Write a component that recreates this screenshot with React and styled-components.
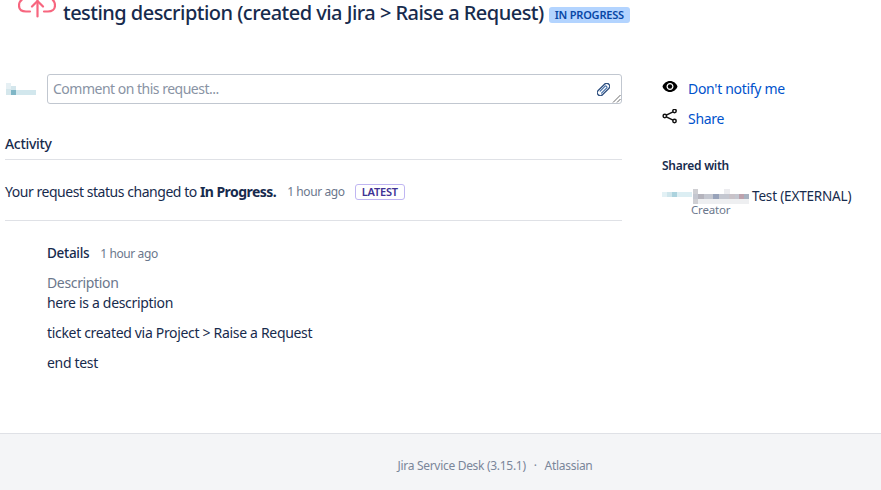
import React from "react";
import styled, { createGlobalStyle } from "styled-components";

const Global = createGlobalStyle`
  html, body { margin: 0; padding: 0; background: #fff; }
  body { font-family: "Noto Sans", "Open Sans", sans-serif; font-size: 14px; color: #172b4d; }
`;
const Page = styled.div`
  width: 881px; height: 490px; overflow: hidden; display: flex; flex-direction: column;
`;
const Header = styled.header`
  height: 74px; display: flex; align-items: flex-start; padding-left: 18px; box-sizing: border-box; overflow: hidden;
`;
const CloudIcon = styled.svg`
  width: 38px; height: 18px; flex: none; margin-right: 7px;
`;
const Title = styled.h1`
  margin: 0; font-size: 20px; font-weight: 500; line-height: 26px; color: #172b4d; white-space: nowrap; letter-spacing: -0.53px;
`;
const StatusLozenge = styled.span`
  margin: 7px 0 0 5px; height: 16px; padding: 0 6px; border-radius: 3px; background: #b3d4ff; color: #0747a6;
  font-size: 11px; font-weight: 600; line-height: 16px; letter-spacing: -0.2px; white-space: nowrap;
`;
const Body = styled.div`
  flex: 1; display: flex; padding-left: 5px;
`;
const Main = styled.main`
  width: 617px; flex: none;
`;
const CommentRow = styled.div`
  display: flex; align-items: center; gap: 11px; height: 30px;
`;
const CommentBox = styled.div`
  position: relative; flex: 1; height: 30px; box-sizing: border-box; border: 1px solid #c1c7d0; border-radius: 3px;
  padding: 0 5px; line-height: 28px; color: #8993a4; letter-spacing: -0.5px;
`;
const Clip = styled.svg`
  position: absolute; right: 11px; top: 8px; width: 13px; height: 13px;
`;
const Grip = styled.svg`
  position: absolute; right: 0; bottom: 0; width: 9px; height: 9px;
`;
const ActivityHead = styled.h2`
  margin: 30px 0 0; padding-bottom: 6px; font-size: 14px; font-weight: 500; line-height: 19px; border-bottom: 1px solid #dfe1e6; letter-spacing: -0.3px;
`;
const StatusRow = styled.div`
  display: flex; align-items: center; box-sizing: border-box; height: 61px; padding-top: 2px; border-bottom: 1px solid #dfe1e6; white-space: nowrap; letter-spacing: -0.46px;
`;
const StatusText = styled.span`
  color: #172b4d;
  b { font-weight: 700; letter-spacing: -0.55px; }
`;
const Time = styled.span`
  margin-left: ${p => p.$gap}px; font-size: 12px; color: #6b778c; letter-spacing: -0.4px;
`;
const LatestTag = styled.span`
  margin: 2px 0 0 10px; height: 14px; padding: 0 6px; border: 1px solid #c0b6f2; border-radius: 3px; color: #403294;
  font-size: 11px; font-weight: 600; line-height: 14px; letter-spacing: -0.2px;
`;
const Details = styled.section`
  padding: 21px 0 0 42px;
`;
const DetailsHead = styled.div`
  display: flex; align-items: center; height: 22px; letter-spacing: -0.3px;
`;
const DetailsLabel = styled.span`
  font-size: 13.5px; font-weight: 500;
`;
const FieldLabel = styled.div`
  margin-top: 9px; line-height: 20px; color: #6b778c; letter-spacing: -0.35px;
`;
const Para = styled.p`
  margin: 0 0 10px; line-height: 20px; letter-spacing: -0.32px;
`;
const Aside = styled.aside`
  margin: -1px 0 0 40px; flex: 1;
`;
const ActionLink = styled.a`
  display: flex; align-items: center; height: 30px; color: #0052cc; letter-spacing: -0.3px; text-decoration: none;
`;
const ActionIcon = styled.svg`
  width: 16px; height: 16px; flex: none; margin-right: 10px; position: relative; top: -1px;
`;
const SharedHead = styled.h3`
  margin: 24px 0 0; font-size: 12px; font-weight: 600; line-height: 17px; letter-spacing: -0.25px;
`;
const Person = styled.div`
  display: flex; align-items: center; margin-top: 13px; height: 18px; white-space: nowrap; letter-spacing: -0.17px;
`;
const Blur = styled.svg`
  flex: none; display: block;
`;
const PersonName = styled.span`
  margin-left: 3px; font-size: 13.5px;
`;
const Role = styled.div`
  margin: -2px 0 0 29px; font-size: 11.5px; line-height: 14px; color: #6b778c; letter-spacing: -0.2px;
`;
const Footer = styled.footer`
  flex: none; height: 57px; box-sizing: border-box; border-top: 1px solid #dfe1e6; background: #f4f5f7;
  display: flex; align-items: center; justify-content: center; gap: 8px; padding: 6px 0 0 109px;
  font-size: 12px; color: #7a869a; letter-spacing: -0.3px;
`;

const Avatar = () => (
  <Blur width="31" height="12" viewBox="0 0 31 12" shapeRendering="crispEdges">
    <rect x="1" y="0" width="5" height="6" fill="#e6f0f4" />
    <rect x="1" y="6" width="5" height="6" fill="#d5e7ec" />
    <rect x="6" y="3" width="5" height="4" fill="#d3e6ec" />
    <rect x="6" y="7" width="5" height="5" fill="#7fb6c6" />
    <rect x="11" y="7" width="20" height="5" fill="#d2e7ed" />
  </Blur>
);
const AvatarSmall = () => (
  <Blur width="30" height="8" viewBox="0 0 30 8" shapeRendering="crispEdges">
    <rect width="5" height="5" y="0" fill="#e3f1f5" />
    <rect x="5" width="5" height="5" fill="#d0e6ec" />
    <rect x="10" width="5" height="5" fill="#acd3de" />
    <rect x="15" width="15" height="5" fill="#dceef3" />
  </Blur>
);
const NameBlur = () => (
  <Blur width="56" height="15" viewBox="0 0 56 15" shapeRendering="crispEdges" style={{ marginLeft: 1 }}>
    <rect x="0" y="0" width="5" height="15" fill="#cfcfd3" />
    <rect x="0" y="5" width="56" height="5" fill="#c4c7d0" />
    <rect x="5" y="5" width="6" height="5" fill="#b5b4bd" />
    <rect x="20" y="5" width="6" height="5" fill="#98a3ba" />
    <rect x="31" y="0" width="6" height="5" fill="#ececef" />
    <rect x="36" y="5" width="6" height="5" fill="#c9c3c9" />
    <rect x="46" y="5" width="5" height="5" fill="#bda2ad" />
    <rect x="51" y="5" width="5" height="5" fill="#a7b1c0" />
    <rect x="5" y="10" width="51" height="5" fill="#eeeff1" />
  </Blur>
);

export default function App() {
  return (
    <Page>
      <Global />
      <Header>
        <CloudIcon viewBox="0 0 38 18" fill="none" stroke="#f7667f" strokeWidth="2.200" strokeLinecap="round" strokeLinejoin="round">
          <path d="M6 -2C2.500 0 1 2.500 1 5.500C1 9.500 4 11.500 8 11.500H12" />
          <path d="M26 11.500H30C34 11.500 37 9 37 5.500C37 2.500 35.500 0 33 -2" />
          <path d="M19.500 16.500V1" />
          <path d="M14 6.500L19.500 1L25 6.500" />
        </CloudIcon>
        <Title>testing description (created via Jira &gt; Raise a Request)</Title>
        <StatusLozenge>IN PROGRESS</StatusLozenge>
      </Header>
      <Body>
        <Main>
          <CommentRow>
            <Avatar />
            <CommentBox>
              Comment on this request...
              <Clip viewBox="0 0 13 13" fill="none" strokeLinecap="round">
                <g transform="rotate(45 6.500 6.500)" stroke="#2f4f7f" strokeWidth="1.300">
                  <rect x="3.500" y="-1" width="6" height="15" rx="3" />
                  <path d="M5.300 10V3C5.300 1.800 7.700 1.800 7.700 3V10.500" stroke="#3d6aa6" strokeWidth="1.100" />
                </g>
              </Clip>
              <Grip viewBox="0 0 9 9" stroke="#6b6b6b" strokeWidth="1">
                <path d="M1 8.500L8.500 1M5 8.500L8.500 5" />
              </Grip>
            </CommentBox>
          </CommentRow>
          <ActivityHead>Activity</ActivityHead>
          <StatusRow>
            <StatusText>Your request status changed to <b>In Progress.</b></StatusText>
            <Time $gap={11}>1 hour ago</Time>
            <LatestTag>LATEST</LatestTag>
          </StatusRow>
          <Details>
            <DetailsHead>
              <DetailsLabel>Details</DetailsLabel>
              <Time $gap={11}>1 hour ago</Time>
            </DetailsHead>
            <FieldLabel>Description</FieldLabel>
            <Para>here is a description</Para>
            <Para>ticket created via Project &gt; Raise a Request</Para>
            <Para>end test</Para>
          </Details>
        </Main>
        <Aside>
          <ActionLink href="#">
            <ActionIcon viewBox="0 0 16 16">
              <path fill="#000" fillRule="evenodd" d="M8 2C4.500 2 1.600 4.400 0.500 7.500C1.600 10.600 4.500 13 8 13C11.500 13 14.400 10.600 15.500 7.500C14.400 4.400 11.500 2 8 2ZM8 11C6.100 11 4.500 9.400 4.500 7.500C4.500 5.600 6.100 4 8 4C9.900 4 11.500 5.600 11.500 7.500C11.500 9.400 9.900 11 8 11Z" />
              <circle cx="8" cy="7.500" r="2.200" fill="#000" />
            </ActionIcon>
            Don't notify me
          </ActionLink>
          <ActionLink href="#">
            <ActionIcon viewBox="0 0 16 16" fill="none" stroke="#111" strokeWidth="1.500">
              <circle cx="2.800" cy="7" r="1.700" />
              <circle cx="12.500" cy="2" r="1.700" />
              <circle cx="12.500" cy="12" r="1.700" />
              <path d="M4.300 6.200L11 2.800M4.300 7.800L11 11.200" />
            </ActionIcon>
            Share
          </ActionLink>
          <SharedHead>Shared with</SharedHead>
          <Person>
            <AvatarSmall />
            <NameBlur />
            <PersonName>Test (EXTERNAL)</PersonName>
          </Person>
          <Role>Creator</Role>
        </Aside>
      </Body>
      <Footer>
        <span>Jira Service Desk (3.15.1)</span>
        <span>·</span>
        <span>Atlassian</span>
      </Footer>
    </Page>
  );
}
